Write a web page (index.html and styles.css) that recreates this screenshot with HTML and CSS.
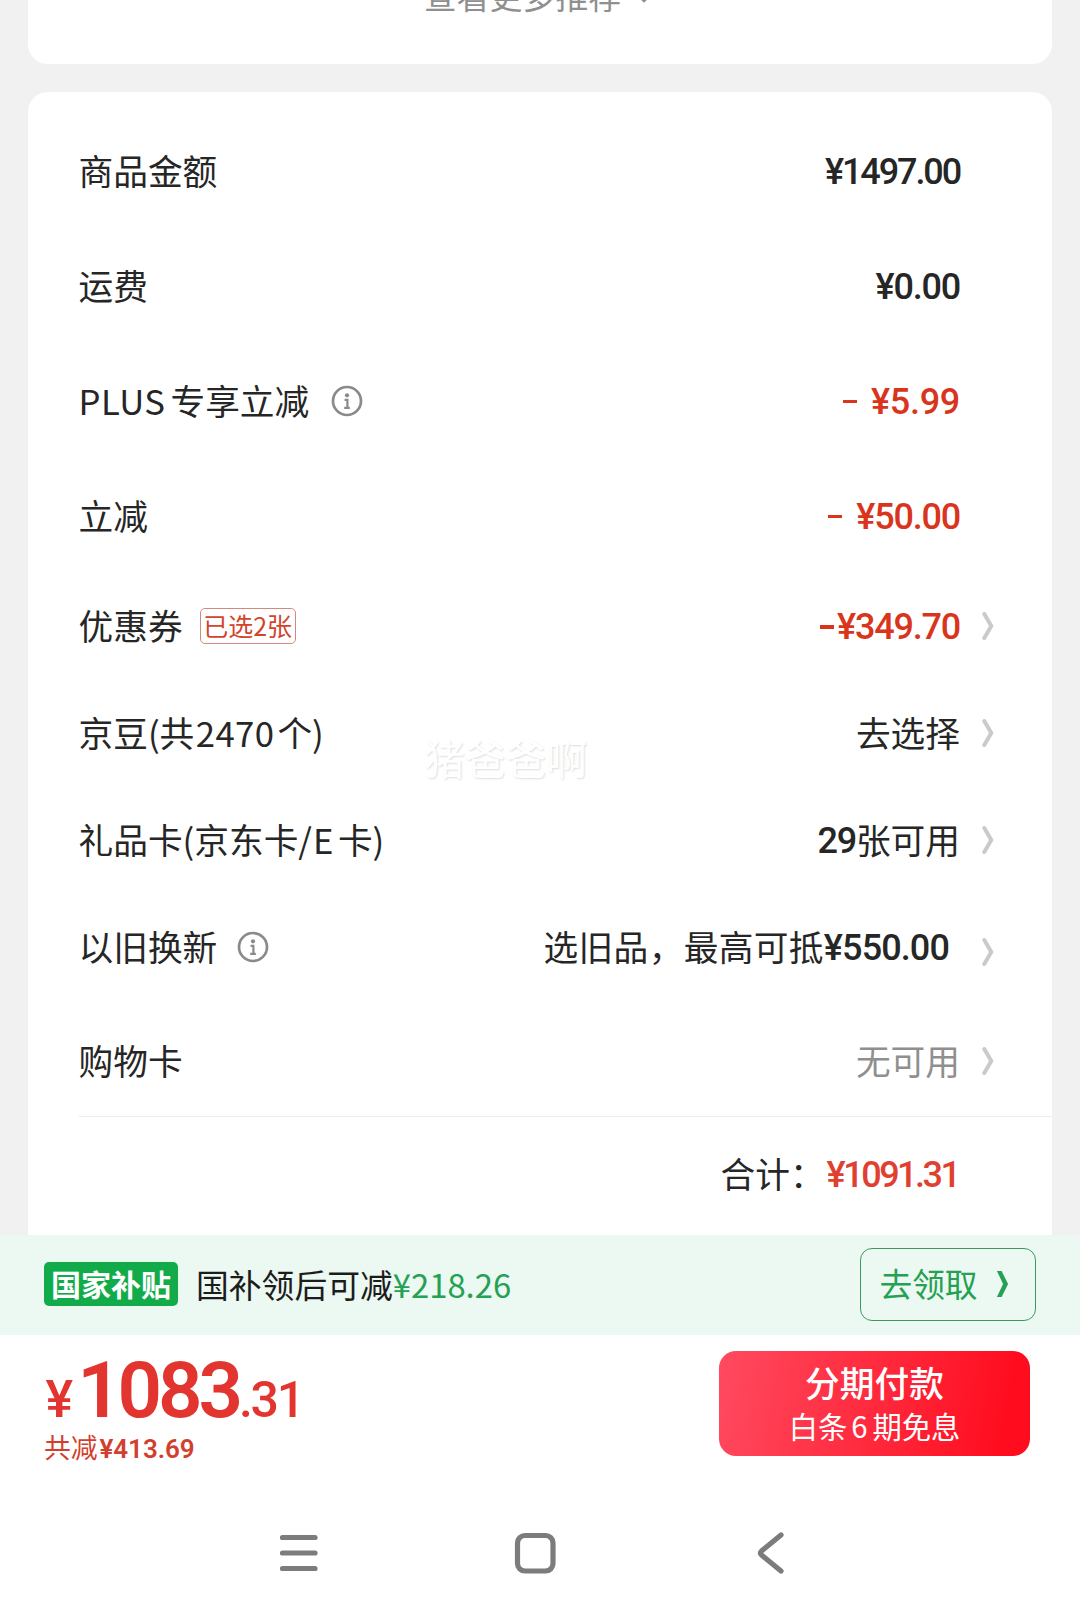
FILE: index.html
```html
<!DOCTYPE html>
<html lang="zh-CN">
<head>
<meta charset="utf-8">
<title>结算</title>
<link rel="stylesheet" href="styles.css">
</head>
<body>
<svg class="defs" width="0" height="0" aria-hidden="true">
  <symbol id="arrow" viewBox="0 0 12 30"><path d="M2.3 3 L9.3 15 L2.3 27" fill="none" stroke="currentColor" stroke-width="4" stroke-linecap="round" stroke-linejoin="round"/></symbol>
  <symbol id="info" viewBox="0 0 32 32"><circle cx="16" cy="16" r="14" fill="none" stroke="currentColor" stroke-width="2.7"/><circle cx="16" cy="10.3" r="2.1" fill="currentColor"/><path d="M13.6 14.8h2.8v7.6M13.2 22.8h5.6" fill="none" stroke="currentColor" stroke-width="2.2"/></symbol>
</svg>
<div class="page">
  <section class="card more">
    <span>查看更多推荐</span>
    <svg class="more-arrow" viewBox="0 0 16 10"><path d="M2 2l6 6 6-6" fill="none" stroke="currentColor" stroke-width="2.6"/></svg>
  </section>

  <section class="card bill">
    <div class="row tall"><span class="label">商品金额</span><span class="value num tight-2">¥1497.00</span></div>
    <div class="row tall"><span class="label">运费</span><span class="value num">¥0.00</span></div>
    <div class="row tall"><span class="label"><span class="latin plus">PLUS</span>专享立减</span><svg class="info"><use href="#info"/></svg><span class="value num red loose"><i class="dash"></i>¥5.99</span></div>
    <div class="row tall"><span class="label">立减</span><span class="value num red"><i class="dash"></i>¥50.00</span></div>
    <div class="row short"><span class="label">优惠券</span><span class="tag">已选2张</span><span class="value num red"><i class="dash near"></i>¥349.70</span><svg class="arrow"><use href="#arrow"/></svg></div>
    <div class="row mid"><span class="label">京豆(共<span class="latin digits">2470</span>个)</span><span class="value">去选择</span><svg class="arrow"><use href="#arrow"/></svg></div>
    <div class="row short"><span class="label">礼品卡(京东卡/<span class="latin letter">E</span>卡)</span><span class="value"><b class="num">29</b>张可用</span><svg class="arrow"><use href="#arrow"/></svg></div>
    <div class="row mid trade"><span class="label">以旧换新</span><svg class="info"><use href="#info"/></svg><span class="value">选旧品，最高可抵<b class="num">¥550.00</b></span><svg class="arrow low"><use href="#arrow"/></svg></div>
    <div class="row last"><span class="label">购物卡</span><span class="value muted">无可用</span><svg class="arrow"><use href="#arrow"/></svg></div>
    <div class="row total"><span class="value">合计：<b class="num sum">¥1091.31</b></span></div>
    <div class="watermark">猪爸爸啊</div>
  </section>

  <section class="subsidy">
    <span class="badge">国家补贴</span>
    <span class="offer">国补领后可减<span class="green">¥218.26</span></span>
    <button class="claim">去领取<svg viewBox="0 0 14 30"><path d="M1 1h5l7 14-7 14H1l6.6-14z" fill="currentColor"/></svg></button>
  </section>

  <section class="checkout">
    <div class="pay">
      <div class="price"><span class="yen">¥</span><span class="whole">1083</span><span class="cents">.31</span></div>
      <div class="saved">共减<b>¥413.69</b></div>
    </div>
    <button class="submit"><span class="main">分期付款</span><span class="sub">白条<span class="six">6</span>期免息</span></button>
  </section>

  <nav class="sysnav">
    <svg viewBox="0 0 48 48"><path d="M7.500 8.500h32.500M7.500 24h32.500M7.500 39.500h32.500" /></svg>
    <svg viewBox="0 0 48 48"><rect x="6.500" y="6.500" width="35.500" height="35.500" rx="7.500"/></svg>
    <svg viewBox="0 0 48 48"><path d="M35 6L15.500 22Q13.500 24 15.500 26L35 42"/></svg>
  </nav>
</div>
</body>
</html>
```
FILE: styles.css
```css
* { box-sizing: border-box; }
body {
  margin: 0;
  background: #f1f1f1;
  color: #262626;
  font-family: "Noto Sans CJK SC", sans-serif;
  font-size: 34.7px;
  line-height: 1;
}
.defs { position: absolute; }
button { border: 0; padding: 0; margin: 0; font: inherit; }
.page { width: 1080px; height: 1618px; display: flex; flex-direction: column; overflow: hidden; }
.card { margin: 0 28px; background: #fff; }

.more {
  height: 64px;
  border-radius: 0 0 20px 20px;
  display: flex;
  justify-content: center;
  align-items: flex-start;
  gap: 15px;
  padding-right: 4px;
  color: #8f8f8f;
  font-size: 32.9px;
}
.more span { margin-top: -21px; }
.more-arrow { width: 16px; height: 10px; margin-top: -7.5px; }

.bill {
  position: relative;
  margin-top: 28px;
  height: 1143px;
  padding: 21px 0 0 50.5px;
  border-radius: 20px 20px 0 0;
}
.row { display: flex; align-items: center; padding-right: 92px; white-space: nowrap; }
.row:has(.arrow) { padding-right: 58px; }
.tall { height: 115px; }
.short { height: 106px; }
.mid { height: 108px; }
.last { height: 116px; padding-top: 5px; border-bottom: 1px solid #ececec; }
.total { height: 114px; }
.label, .value { padding-bottom: 1px; }
.latin { margin-right: 3.5px; }
.plus { margin-right: 5px; letter-spacing: 0.5px; }
.digits { margin: 0 3px 0 1.5px; letter-spacing: 0.4px; }
.letter { margin: 0 4.5px 0 1px; }
.value { margin-left: auto; display: flex; align-items: center; }
.num { font-family: Roboto, sans-serif; font-size: 36px; font-weight: 500; letter-spacing: -1.2px; padding: 2px 0 0; }
b.num { padding-top: 2px; }
.num.tight-2 { letter-spacing: -2.1px; }
.num.loose { letter-spacing: -0.3px; }
.red { color: #d9351d; }
.muted { color: #8f8f8f; }
.num.sum { color: #e0402f; letter-spacing: -2.5px; margin: 0 1.5px 0 2px; }
.dash { width: 14px; height: 3.8px; margin-right: 14px; background: currentColor; }
.dash.near { margin-right: 2.5px; }
.info { width: 32px; height: 32px; margin-left: 22px; color: #8a8a8a; }
.trade .info { margin-left: 20px; }
.trade .value { letter-spacing: 0.35px; }
.trade .num { margin-right: 11px; letter-spacing: -0.9px; }
.arrow { width: 12px; height: 30px; margin-left: 22px; color: #cacaca; }
.arrow.low { margin-top: 10px; }
.tag {
  height: 36px;
  width: 96px;
  margin-left: 17px;
  border: 1px solid #d08b7c;
  border-radius: 5px;
  color: #d2452d;
  font-size: 25px;
  line-height: 32px;
  text-align: center;
}
.watermark {
  position: absolute;
  left: 396px;
  top: 646px;
  color: #fff;
  font-size: 40.8px;
  text-shadow: 1px 1px 2px #dedede;
}

.subsidy { height: 100px; background: #ecf8f2; display: flex; align-items: center; padding: 0 44px 2px; }
.badge {
  width: 134px;
  height: 44px;
  border-radius: 5px;
  background: #12ab49;
  color: #fff;
  font-size: 30px;
  font-weight: 700;
  line-height: 42px;
  text-align: center;
}
.offer { margin-left: 18px; font-size: 32.8px; color: #1c1c1c; }
.green { color: #24a152; }
.claim {
  width: 176px;
  height: 73px;
  margin-left: auto;
  border: 1.5px solid #3c9a5f;
  border-radius: 12px;
  background: none;
  color: #24a152;
  font-size: 32.7px;
  display: flex;
  align-items: center;
  justify-content: center;
  gap: 18px;
  padding: 0 8px 1px 0;
}
.claim svg { width: 13px; height: 28px; margin-top: 1px; }

.checkout { height: 140px; background: #fff; display: flex; padding: 16px 50px 0 44px; }
.pay { color: #e3352f; }
.price { display: flex; align-items: baseline; height: 83px; padding-top: 1px; font-family: Roboto, sans-serif; }
.yen { font-size: 52px; margin-left: 1.5px; font-weight: 500; }
.whole { font-size: 78px; font-weight: 600; letter-spacing: -4.1px; margin-left: 4px; }
.cents { font-size: 50px; font-weight: 500; letter-spacing: -2.3px; }
.saved { font-size: 26.8px; color: #d23f2e; }
.saved b { font-family: Roboto, sans-serif; font-size: 26px; font-weight: 600; letter-spacing: -0.1px; margin-left: 2px; }
.submit {
  width: 311px;
  height: 105px;
  margin-left: auto;
  border-radius: 17px;
  background: linear-gradient(100deg, #ff4a60 0%, #ff2639 55%, #ff0c1e 92%);
  color: #fff;
  display: flex;
  flex-direction: column;
  align-items: center;
  justify-content: center;
  gap: 11px;
  padding-bottom: 2px;
}
.main { font-size: 34.7px; font-weight: 500; }
.sub { font-size: 29.3px; }
.six { margin: 0 5px 0 4px; }

.sysnav { flex: 1; background: #fff; display: flex; justify-content: center; gap: 187.5px; padding: 54px 11px 0 0; }
.sysnav svg { width: 48px; height: 48px; fill: none; stroke: #7c7c7c; stroke-width: 5.2; stroke-linecap: round; stroke-linejoin: round; }
```
